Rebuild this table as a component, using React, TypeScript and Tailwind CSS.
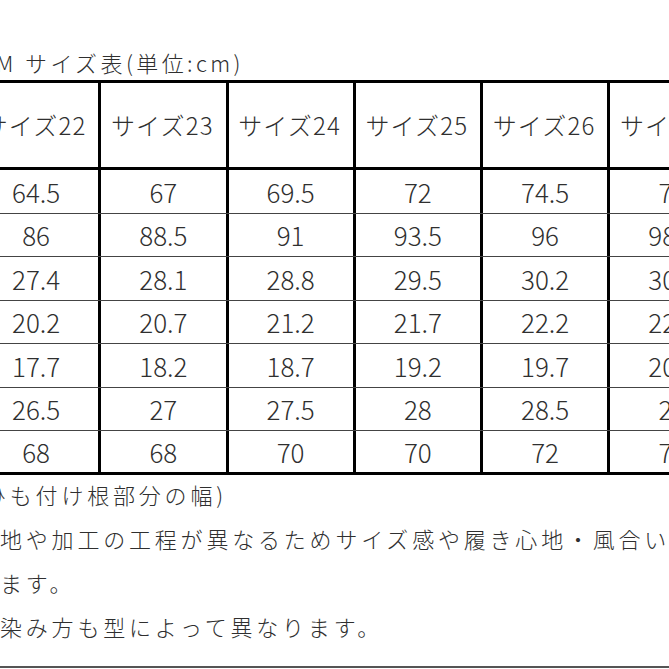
const FONT = "font-['Noto_Sans_CJK_JP','Noto_Sans',sans-serif]";

const SIZES = ["22", "23", "24", "25", "26", "27"];

// each row = one measurement, values per size 22..27
const ROWS: string[][] = [
  ["64.5", "67", "69.5", "72", "74.5", "77"],
  ["86", "88.5", "91", "93.5", "96", "98.5"],
  ["27.4", "28.1", "28.8", "29.5", "30.2", "30.9"],
  ["20.2", "20.7", "21.2", "21.7", "22.2", "22.7"],
  ["17.7", "18.2", "18.7", "19.2", "19.7", "20.2"],
  ["26.5", "27", "27.5", "28", "28.5", "29"],
  ["68", "68", "70", "70", "72", "72"],
];

export default function App() {
  return (
    <div className={`${FONT} flex h-[669px] w-[669px] flex-col overflow-hidden bg-white font-light text-[#2f2f2f]`}>
      <div className="ml-[-4px] whitespace-nowrap pt-[47px] text-[22px] leading-[30px] tracking-[3.4px]">
        M サイズ表(単位:cm)
      </div>

      <div className="ml-[-26px] mt-[3px] w-max border-t-[3px] border-black">
        <div className="flex h-[87px] border-b-[3px] border-black">
          {SIZES.map((s) => (
            <div
              key={s}
              className="flex w-[127.25px] shrink-0 items-center justify-center border-r-[3px] border-black pr-[2px] text-[24px] tracking-[1.2px]"
            >
              サイズ{s}
            </div>
          ))}
        </div>
        {ROWS.map((row, r) => (
          <div
            key={r}
            className={`flex h-[43.5px] ${r === ROWS.length - 1 ? "border-b-[3px] border-black" : "border-b-[1.5px] border-[#444]"}`}
          >
            {row.map((v, c) => (
              <div
                key={c}
                className="flex w-[127.25px] shrink-0 items-center justify-center border-r-[3px] border-black text-[26px]"
              >
                {v}
              </div>
            ))}
          </div>
        ))}
      </div>

      <div className="mt-[-3px] whitespace-nowrap text-[22px] leading-[44px] tracking-[3.8px]">
        <p className="ml-[-16px]">ひも付け根部分の幅)</p>
        <p>地や加工の工程が異なるためサイズ感や履き心地・風合いが</p>
        <p>ます。</p>
        <p>染み方も型によって異なります。</p>
      </div>

      <div className="mt-auto mb-[1px] h-[2px] bg-[#555]" />
    </div>
  );
}
